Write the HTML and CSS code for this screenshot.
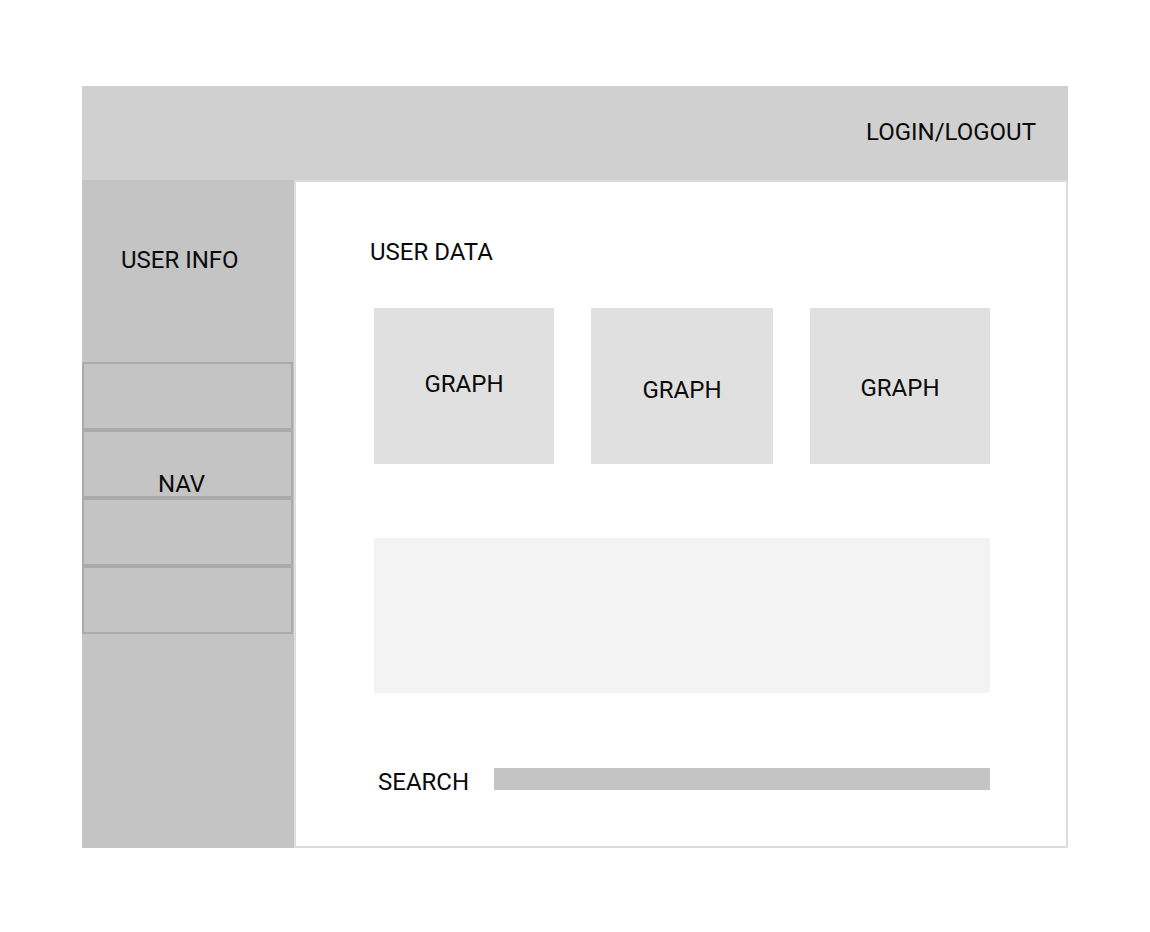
FILE: index.html
```html
<!DOCTYPE html>
<html lang="en">
<head>
    <meta charset="UTF-8" />
    <meta name="viewport" content="width=device-width, initial-scale=1.0"/>
    <title>Dashboard Wireframe</title>
    <link rel="stylesheet" href="styles.css">
</head>
<body>
<div class="frame">
    <header class="topbar">
        <span class="login">LOGIN/LOGOUT</span>
    </header>

    <div class="layout">
        <aside class="sidebar">
            <div class="user-info">USER INFO</div>
            <nav class="nav">
                <div class="nav-item"></div>
                <div class="nav-item nav-label">NAV</div>
                <div class="nav-item"></div>
                <div class="nav-item"></div>
            </nav>
        </aside>

        <main class="content">
            <h2 class="title">USER DATA</h2>

            <div class="graphs">
                <div class="graph graph-1">GRAPH</div>
                <div class="graph graph-2">GRAPH</div>
                <div class="graph graph-3">GRAPH</div>
            </div>

            <div class="panel"></div>

            <div class="search">
                <span class="search-label">SEARCH</span>
                <div class="search-bar"></div>
            </div>
        </main>
    </div>
</div>
</body>
</html>
```

FILE: styles.css
```css
body {
    margin: 0;
    padding: 0;
    font-family: Roboto, 'Liberation Sans', sans-serif;
    font-size: 24px;
    line-height: 28px;
    color: #0a0a0a;
    background-color: white;
}

.frame {
    margin: 86px 0 0 82px;
    width: 986px;
}

.topbar {
    height: 94px;
    background-color: #d0d0d0;
    display: flex;
    align-items: center;
    justify-content: flex-end;
    padding: 0 32px 3px 0;
    box-sizing: border-box;
}

.layout {
    display: flex;
    height: 668px;
}

.sidebar {
    width: 212px;
    background-color: #c4c4c4;
}

.user-info {
    height: 182px;
    padding: 66px 0 0 39px;
    box-sizing: border-box;
}

.nav-item {
    width: 211px;
    height: 68px;
    border: 2px solid #aaaaaa;
    box-sizing: border-box;
}

.nav-label {
    text-align: center;
    padding: 38px 12px 0 0;
}

.content {
    flex: 1;
    background-color: white;
    border: 2px solid #dcdcdc;
    padding: 56px 76px 0 78px;
}

.title {
    margin: 0 0 42px -4px;
    font-size: 24px;
    font-weight: normal;
    line-height: 28px;
}

.graphs {
    display: grid;
    grid-template-columns: 180px 182px 180px;
    justify-content: space-between;
}

.graph {
    height: 156px;
    background-color: #e0e0e0;
    text-align: center;
    box-sizing: border-box;
}

.graph-1 {
    padding-top: 62px;
}

.graph-2 {
    padding-top: 68px;
}

.graph-3 {
    padding-top: 66px;
}

.panel {
    margin-top: 74px;
    height: 155px;
    background-color: #f3f3f3;
}

.search {
    margin-top: 75px;
    display: flex;
    align-items: flex-start;
}

.search-label {
    width: 120px;
    padding-left: 4px;
    box-sizing: border-box;
}

.search-bar {
    flex: 1;
    height: 22px;
    background-color: #c4c4c4;
}
```
